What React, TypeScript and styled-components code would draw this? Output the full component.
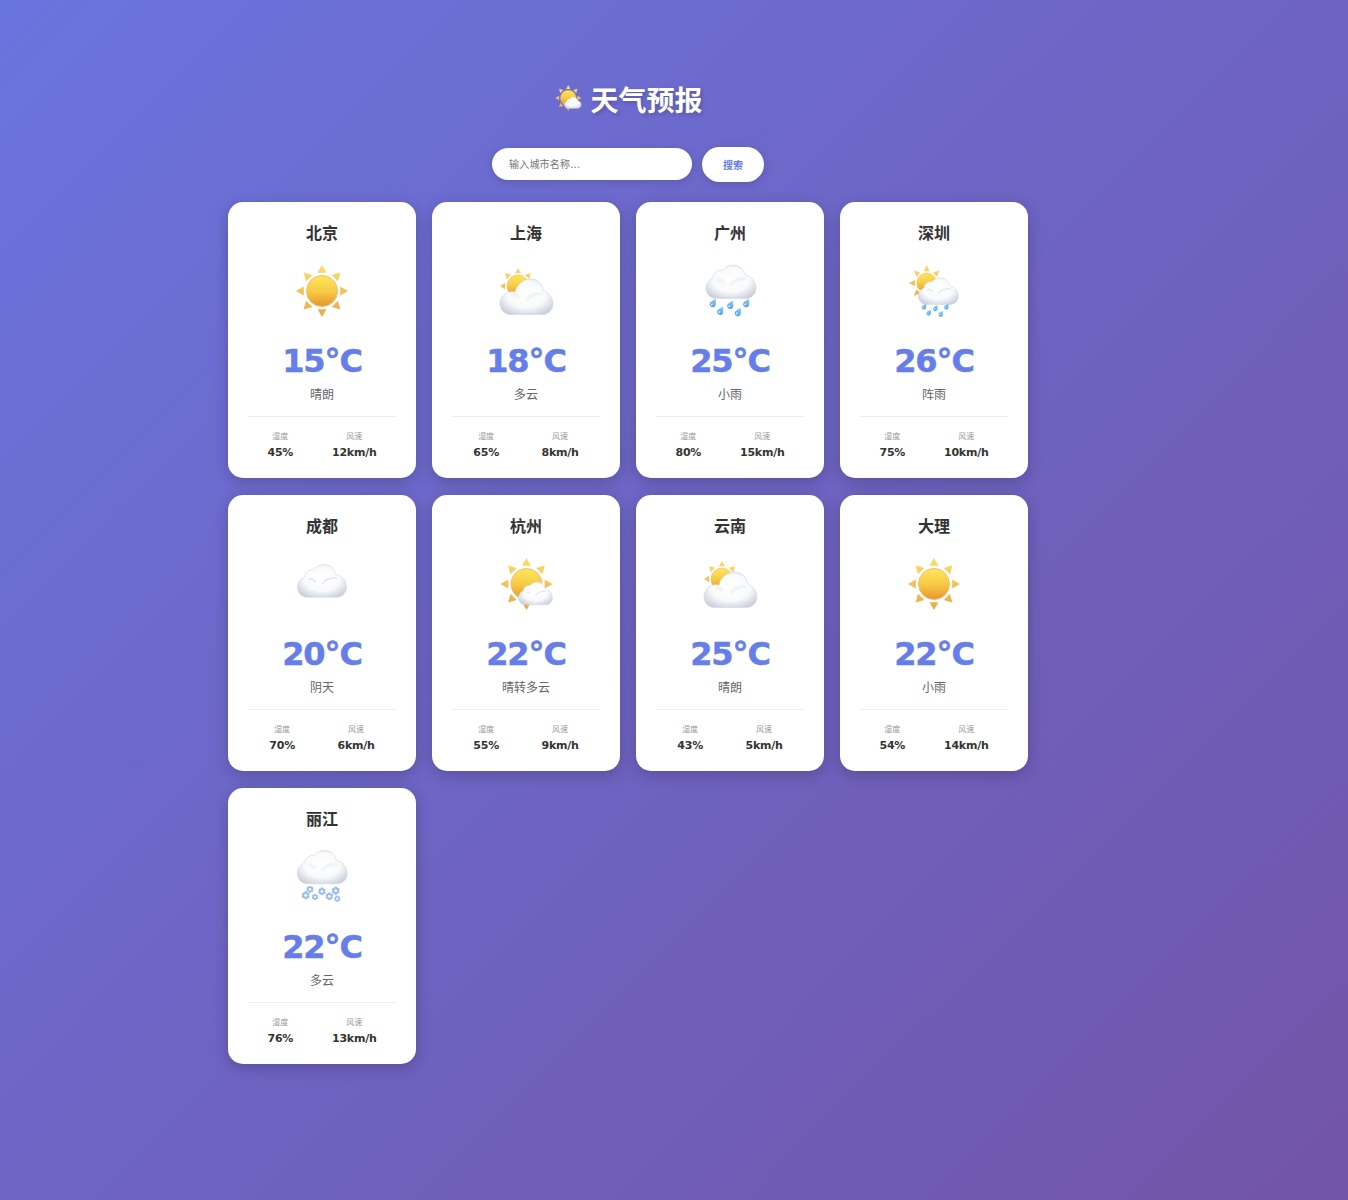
import React from 'react';
import styled, { createGlobalStyle } from 'styled-components';

type IconKind = 'sun' | 'partly' | 'rain' | 'shower' | 'cloud' | 'mostlySun' | 'snow';
type City = { name: string; icon: IconKind; temp: number; desc: string; humidity: number; wind: number };

const cities: City[] = [
    { name: '北京', icon: 'sun', temp: 15, desc: '晴朗', humidity: 45, wind: 12 },
    { name: '上海', icon: 'partly', temp: 18, desc: '多云', humidity: 65, wind: 8 },
    { name: '广州', icon: 'rain', temp: 25, desc: '小雨', humidity: 80, wind: 15 },
    { name: '深圳', icon: 'shower', temp: 26, desc: '阵雨', humidity: 75, wind: 10 },
    { name: '成都', icon: 'cloud', temp: 20, desc: '阴天', humidity: 70, wind: 6 },
    { name: '杭州', icon: 'mostlySun', temp: 22, desc: '晴转多云', humidity: 55, wind: 9 },
    { name: '云南', icon: 'partly', temp: 25, desc: '晴朗', humidity: 43, wind: 5 },
    { name: '大理', icon: 'sun', temp: 22, desc: '小雨', humidity: 54, wind: 14 },
    { name: '丽江', icon: 'snow', temp: 22, desc: '多云', humidity: 76, wind: 13 },
];

const GlobalStyle = createGlobalStyle`
* { box-sizing: border-box; margin: 0; padding: 0; }
body {
    font-family: "DejaVu Sans", "Noto Sans CJK SC", sans-serif;
    background: linear-gradient(135deg, #6a74de 0%, #7254a8 100%);
    min-height: 1200px;
}
`;

const Page = styled.div`
padding: 80px 320px 0 228px;
`;

const Title = styled.h1`
display: flex;
justify-content: center;
align-items: center;
gap: 7px;
height: 40px;
padding-bottom: 2px;
font-size: 28px;
font-weight: 700;
color: #fff;
text-shadow: 2px 2px 4px rgba(0, 0, 0, 0.2);
margin-bottom: 27px;
`;

const SearchBar = styled.div`
display: flex;
justify-content: center;
align-items: flex-start;
gap: 10px;
margin-bottom: 20px;
`;

const SearchInput = styled.input`
width: 200px;
height: 32px;
margin-top: 1px;
padding: 0 17px;
border: none;
border-radius: 16px;
font-family: inherit;
font-size: 10px;
background: #fff;
box-shadow: 0 2px 8px rgba(0, 0, 0, 0.15);
outline: none;
&::placeholder { color: #757575; letter-spacing: 0.2px; }
`;

const SearchButton = styled.button`
width: 62px;
height: 35px;
border: none;
border-radius: 18px;
padding-bottom: 1px;
font-family: inherit;
font-size: 10px;
font-weight: 700;
color: #667eea;
background: #fff;
box-shadow: 0 2px 8px rgba(0, 0, 0, 0.15);
`;

const Grid = styled.div`
display: grid;
grid-template-columns: repeat(4, 188px);
grid-auto-rows: 276px;
column-gap: 16px;
row-gap: 17px;
`;

const Card = styled.div`
background: #fff;
border-radius: 15px;
padding: 20px;
text-align: center;
box-shadow: 0 4px 16px rgba(0, 0, 0, 0.2);
`;

const CityName = styled.h2`
font-size: 16px;
font-weight: 700;
line-height: 23px;
color: #333;
`;

const IconSvg = styled.svg<{ $size: number }>`
display: block;
flex: none;
width: ${p => p.$size}px;
height: ${p => p.$size}px;
`;

const TitleIcon = styled.span`
display: block;
margin-bottom: 2px;
`;

const CardIcon = styled.div`
width: 60px;
margin: 16px auto 0;
`;

const Temp = styled.div`
font-size: 32px;
font-weight: 700;
line-height: 38px;
letter-spacing: -1.1px;
-webkit-text-stroke: 0.5px #667eea;
color: #667eea;
margin-top: 21px;
`;

const Desc = styled.div`
font-size: 12px;
line-height: 17px;
color: #666;
margin-top: 7px;
`;

const Details = styled.div`
display: flex;
justify-content: space-around;
border-top: 1px solid #eee;
margin-top: 12px;
padding-top: 14px;
`;

const Detail = styled.div`
display: flex;
flex-direction: column;
align-items: center;
`;

const DetailLabel = styled.span`
font-size: 8px;
line-height: 12px;
color: #999;
`;

const DetailValue = styled.span`
font-size: 11px;
font-weight: 700;
line-height: 16px;
letter-spacing: -0.25px;
color: #333;
margin-top: 2px;
`;

// both outlines are drawn in a 100 x 67 box
const CLOUD_ROUND = 'M20 67C8 67 0 57 0 46C0 36 6 29 14 26C15 16 23 9 34 10C39 3 47 0 54 0C66 0 76 8 78 20C90 22 100 33 100 46C100 58 91 67 80 67Z';
const CLOUD_SIDE = 'M20 67C8 67 0 57 0 46C0 34 10 24 22 24C24 24 26 24 28 25C32 10 44 0 58 0C71 0 80 9 82 22C92 26 100 35 100 47C100 58 91 67 80 67Z';

function IconDefs() {
    return (
        <defs>
            <linearGradient id="sunDisk" x1="0" y1="0" x2="0" y2="1">
                <stop offset="0" stopColor="#fde65a" />
                <stop offset="0.5" stopColor="#f8cb45" />
                <stop offset="1" stopColor="#e5952e" />
            </linearGradient>
            <linearGradient id="sunRays" x1="0" y1="0" x2="0" y2="1">
                <stop offset="0" stopColor="#fbdc68" />
                <stop offset="1" stopColor="#eea845" />
            </linearGradient>
            <radialGradient id="cloudFill" cx="0.5" cy="0.45" r="0.62">
                <stop offset="0" stopColor="#ffffff" />
                <stop offset="0.58" stopColor="#f9fafb" />
                <stop offset="1" stopColor="#c9d0db" />
            </radialGradient>
            <linearGradient id="dropFill" x1="0" y1="0" x2="0" y2="1">
                <stop offset="0" stopColor="#97cff6" />
                <stop offset="1" stopColor="#4aa3ea" />
            </linearGradient>
            <filter id="softCrease" x="-20%" y="-20%" width="140%" height="140%">
                <feGaussianBlur stdDeviation="1.6" />
            </filter>
        </defs>
    );
}

function Sun({ cx, cy, r, reach }: { cx: number; cy: number; r: number; reach: number }) {
    const ang = [0, 45, 90, 135, 180, 225, 270, 315];
    const halfWidth = r * 0.29;
    const base = r + r * 0.17;
    const rays = ang.map(a => {
        const rad = (a * Math.PI) / 180;
        const dx = Math.sin(rad);
        const dy = -Math.cos(rad);
        const tip = `${cx + dx * reach} ${cy + dy * reach}`;
        const left = `${cx + dx * base - dy * halfWidth} ${cy + dy * base + dx * halfWidth}`;
        const right = `${cx + dx * base + dy * halfWidth} ${cy + dy * base - dx * halfWidth}`;
        return `M${tip}L${left}L${right}Z`;
    }).join('');
    return (
        <g>
            <path d={rays} fill="url(#sunRays)" />
            <circle cx={cx} cy={cy} r={r} fill="url(#sunDisk)" stroke="#f0b878" strokeWidth={r * 0.06} />
        </g>
    );
}

function Cloud({ x, y, width, side }: { x: number; y: number; width: number; side?: boolean }) {
    const scale = width / 100;
    return (
        <g transform={`translate(${x} ${y}) scale(${scale})`}>
            <path d={side ? CLOUD_SIDE : CLOUD_ROUND} fill="url(#cloudFill)" stroke="#d3d8e0" strokeWidth="1.2" />
            <g fill="none" stroke="#e3e6ec" strokeWidth="3" filter="url(#softCrease)">
                <path d="M22 30C28 28 33 31 36 36" />
                <path d="M50 40C56 30 70 26 80 28" />
            </g>
        </g>
    );
}

function Drop({ x, y, size }: { x: number; y: number; size: number }) {
    return (
        <g transform={`translate(${x} ${y}) rotate(28) scale(${size / 8})`}>
            <path d="M0-4.6C1.2-2.4 2.7-0.9 2.7 1C2.7 2.6 1.5 3.6 0 3.6C-1.5 3.6-2.7 2.6-2.7 1C-2.7-0.9-1.2-2.4 0-4.6Z" fill="url(#dropFill)" />
            <ellipse cx="-0.7" cy="1.5" rx="0.7" ry="1" fill="#e4f3fd" />
        </g>
    );
}

function Flake({ x, y, r }: { x: number; y: number; r: number }) {
    const petals = [0, 60, 120, 180, 240, 300];
    return (
        <g transform={`translate(${x} ${y})`}>
            {petals.map(a => (
                <circle
                    key={a}
                    cx={Math.sin((a * Math.PI) / 180) * r * 0.68}
                    cy={-Math.cos((a * Math.PI) / 180) * r * 0.68}
                    r={r * 0.42}
                    fill="#9cbfea"
                />
            ))}
            <circle r={r * 0.36} fill="#f0f6fd" />
        </g>
    );
}

function WeatherIcon({ kind, size = 60 }: { kind: IconKind; size?: number }) {
    return (
        <IconSvg $size={size} viewBox="0 0 60 60" aria-hidden="true">
            <IconDefs />
            {kind === 'sun' && <Sun cx={30} cy={30} r={15.5} reach={26} />}
            {kind === 'partly' && (
                <>
                    <Sun cx={22} cy={25} r={11} reach={18} />
                    <Cloud x={4} y={18} width={53} side />
                </>
            )}
            {kind === 'rain' && (
                <>
                    <Cloud x={6} y={4} width={50} />
                    {[[13.3, 42.3], [30.7, 44], [46.7, 42.3], [20.7, 50], [38.3, 51.3]].map(([x, y]) => (
                        <Drop key={x} x={x} y={y} size={9} />
                    ))}
                </>
            )}
            {kind === 'shower' && (
                <>
                    <Sun cx={22.7} cy={22} r={10} reach={18} />
                    <Cloud x={14.3} y={16.7} width={40} />
                    {[[20.3, 45.7], [31.7, 47.3], [42.7, 45.7], [25, 51.7], [37, 53]].map(([x, y]) => (
                        <Drop key={x} x={x} y={y} size={6.5} />
                    ))}
                </>
            )}
            {kind === 'cloud' && <Cloud x={5.5} y={10.5} width={49} />}
            {kind === 'mostlySun' && (
                <>
                    <Sun cx={30.5} cy={30} r={15.5} reach={26} />
                    <Cloud x={22.5} y={28} width={34} />
                </>
            )}
            {kind === 'snow' && (
                <>
                    <Cloud x={5.3} y={3.3} width={50} />
                    {[[18, 42.3, 3.3], [13.7, 48.3, 3.8], [23, 50, 3], [30, 44.3, 3.6], [37.3, 49.3, 3.6], [43.7, 43.7, 3.8], [45.3, 51.7, 3]].map(([x, y, r]) => (
                        <Flake key={x} x={x} y={y} r={r} />
                    ))}
                </>
            )}
        </IconSvg>
    );
}

export default function App() {
    return (
        <Page>
            <GlobalStyle />
            <Title>
                <TitleIcon><WeatherIcon kind="mostlySun" size={30} /></TitleIcon>
                <span>天气预报</span>
            </Title>
            <SearchBar>
                <SearchInput placeholder="输入城市名称..." />
                <SearchButton>搜索</SearchButton>
            </SearchBar>
            <Grid>
                {cities.map(city => (
                    <Card key={city.name}>
                        <CityName>{city.name}</CityName>
                        <CardIcon><WeatherIcon kind={city.icon} /></CardIcon>
                        <Temp>{city.temp}°C</Temp>
                        <Desc>{city.desc}</Desc>
                        <Details>
                            <Detail>
                                <DetailLabel>湿度</DetailLabel>
                                <DetailValue>{city.humidity}%</DetailValue>
                            </Detail>
                            <Detail>
                                <DetailLabel>风速</DetailLabel>
                                <DetailValue>{city.wind}km/h</DetailValue>
                            </Detail>
                        </Details>
                    </Card>
                ))}
            </Grid>
        </Page>
    );
}
